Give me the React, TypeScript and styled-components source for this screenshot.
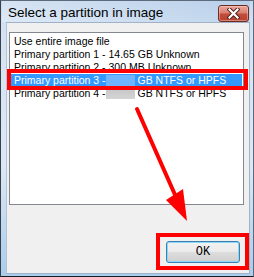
import React from 'react';
import styled, { createGlobalStyle } from 'styled-components';

const GlobalStyle = createGlobalStyle`
  html, body {
    margin: 0;
    padding: 0;
    background: #ffffff;
  }
  body {
    width: 254px;
    height: 277px;
    overflow: hidden;
  }
`;

const Window = styled.div`
  position: relative;
  width: 254px;
  height: 277px;
  box-sizing: border-box;
  display: flex;
  flex-direction: column;
  padding: 0 3px 2px 5px;
  border: 1px solid #5d6a7c;
  border-bottom-color: #1c1c1c;
  border-left-color: #3a3f48;
  background: linear-gradient(to bottom, #c6d9ee 0px, #d3e2f3 22px, #dce8f5 60%, #a8cdee 100%);
`;

const TitleBar = styled.div`
  height: 21px;
  display: flex;
  align-items: center;
  justify-content: space-between;
  margin-left: -4px;
  padding-left: 6px;
  background: linear-gradient(to right, rgba(255, 255, 255, 0.25), rgba(160, 190, 225, 0.35));
`;

const Title = styled.span`
  font-family: "Liberation Sans", Arial, sans-serif;
  font-size: 13.5px;
  color: #000000;
  padding-top: 1px;
`;

const CloseButton = styled.div`
  width: 31px;
  height: 17px;
  box-sizing: border-box;
  margin-right: 1px;
  margin-top: 4px;
  border: 1px solid #6e2a24;
  border-radius: 3px;
  background: linear-gradient(to bottom, #e9a99c 0%, #d98071 45%, #c24c3a 55%, #b8412f 100%);
  box-shadow: inset 0 0 0 1px rgba(255, 210, 200, 0.45);
  display: flex;
  align-items: center;
  justify-content: center;
`;

const Client = styled.div`
  flex: 1;
  display: flex;
  flex-direction: column;
  background: #f0f0f0;
  border: 1px solid #9fb2c8;
  border-left-color: #b4c4d6;
`;

const ListBox = styled.div`
  height: 173px;
  flex: none;
  box-sizing: border-box;
  margin: 9px 5px 0 2px;
  padding: 2px 1px 0 1px;
  background: #ffffff;
  border: 1px solid #828790;
`;

const Item = styled.div<{ selected?: boolean }>`
  height: 13px;
  line-height: 13px;
  padding-left: 3px;
  white-space: nowrap;
  font-family: "Liberation Sans", Arial, sans-serif;
  font-size: 10.5px;
  color: ${({ selected }) => (selected ? '#ffffff' : '#000000')};
  background: ${({ selected }) => (selected ? '#3399ff' : 'transparent')};
`;

const Redacted = styled.span<{ selected?: boolean }>`
  display: inline-block;
  width: 29px;
  height: 11px;
  vertical-align: -2px;
  margin-left: -3px;
  margin-right: 3px;
  background: ${({ selected }) => (selected ? '#6fb4ff' : 'linear-gradient(#c6c6c6, #d4d4d4)')};
`;

const Footer = styled.div`
  flex: 1;
  display: flex;
  justify-content: flex-end;
  align-items: flex-start;
  padding: 36px 9px 0 0;
`;

const OkButton = styled.button`
  width: 74px;
  height: 22px;
  box-sizing: border-box;
  padding: 0;
  border: 1px solid #3c7fb1;
  border-radius: 3px;
  background: linear-gradient(to bottom, #f2f2f2 0%, #ebebeb 48%, #dddddd 52%, #cfcfcf 100%);
  box-shadow: inset 0 0 0 1px #8ad8f4;
  font-family: "Liberation Mono", "Courier New", monospace;
  font-size: 12px;
  font-weight: 400;
  color: #000000;
`;

const Marker = styled.div<{ left: number; top: number; w: number; h: number }>`
  position: absolute;
  left: ${({ left }) => left - 1}px;
  top: ${({ top }) => top - 1}px;
  width: ${({ w }) => w}px;
  height: ${({ h }) => h}px;
  box-sizing: border-box;
  border: 4px solid #ff0000;
  pointer-events: none;
`;

const ArrowLayer = styled.svg`
  position: absolute;
  left: -1px;
  top: -1px;
  width: 254px;
  height: 277px;
  pointer-events: none;
`;

const CloseGlyph = () => (
  <svg width="13" height="11" viewBox="0 0 13 11">
    <path d="M2.5 1.5 L10.5 9.5 M10.5 1.5 L2.5 9.5" stroke="#4a1a16" strokeWidth="4" strokeLinecap="square" />
    <path d="M2.5 1.5 L10.5 9.5 M10.5 1.5 L2.5 9.5" stroke="#ffffff" strokeWidth="2.2" strokeLinecap="square" />
  </svg>
);

export default function App() {
  return (
    <>
      <GlobalStyle />
      <Window>
        <TitleBar>
          <Title>Select a partition in image</Title>
          <CloseButton>
            <CloseGlyph />
          </CloseButton>
        </TitleBar>
        <Client>
          <ListBox>
            <Item>Use entire image file</Item>
            <Item>Primary partition 1 - 14.65 GB Unknown</Item>
            <Item>Primary partition 2 - 300 MB Unknown</Item>
            <Item selected>
              Primary partition 3 - <Redacted selected />GB NTFS or HPFS
            </Item>
            <Item>
              Primary partition 4 - <Redacted />GB NTFS or HPFS
            </Item>
          </ListBox>
          <Footer>
            <OkButton>OK</OkButton>
          </Footer>
        </Client>

        <Marker left={7} top={69} w={241} h={21} />
        <Marker left={156} top={233} w={93} h={37} />
        <ArrowLayer viewBox="0 0 254 277">
          <line x1="137" y1="109" x2="176" y2="197" stroke="#ff0000" strokeWidth="4" strokeLinecap="round" />
          <polygon points="166,200 183,189 187,221" fill="#ff0000" />
        </ArrowLayer>
      </Window>
    </>
  );
}
